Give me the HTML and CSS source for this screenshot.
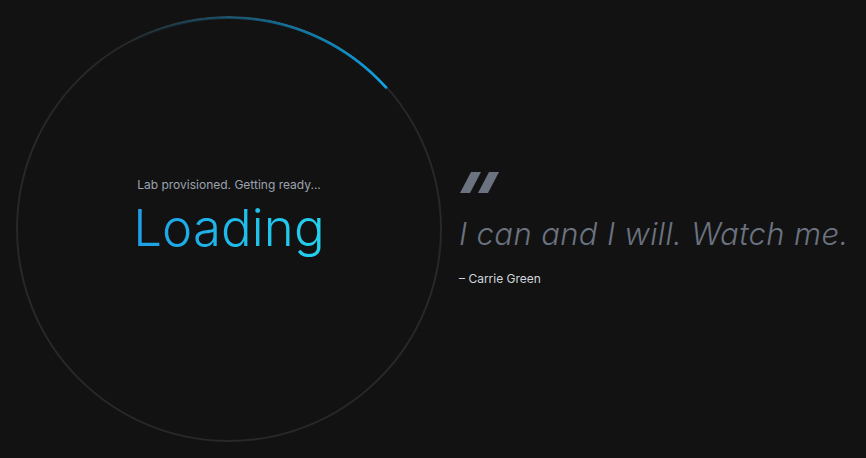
FILE: index.html
```html
<!DOCTYPE html>
<html>
<head>
<meta charset="utf-8">
<link rel="stylesheet" href="styles.css">
</head>
<body>
<main class="page">
  <section class="loader">
    <div class="ring"></div>
    <div class="arc"></div>
    <div class="status">
      <p class="status-line">Lab provisioned. Getting ready...</p>
      <h1 class="loading">Loading</h1>
    </div>
  </section>
  <section class="quote">
    <svg class="quote-mark" width="40" height="21" viewBox="0 0 40 21">
      <polygon points="11,0 21,0 10,21 0,21" fill="#6b7280"/>
      <polygon points="29,0 39,0 28,21 18,21" fill="#6b7280"/>
    </svg>
    <p class="quote-text">I can and I will. Watch me.</p>
    <p class="author">– Carrie Green</p>
  </section>
</main>
</body>
</html>
```
FILE: styles.css
```css
html, body {
  margin: 0;
  padding: 0;
  background: #121212;
}
.page {
  width: 866px;
  height: 458px;
  display: flex;
  align-items: center;
  padding-left: 16px;
  box-sizing: border-box;
  gap: 17px;
}
.loader {
  display: grid;
  width: 426px;
  height: 426px;
  flex: none;
}
.ring, .arc, .status {
  grid-area: 1 / 1;
}
.ring {
  border: 2px solid #282828;
  border-radius: 50%;
}
.arc {
  border-radius: 50%;
  background: conic-gradient(from -30deg, rgba(14,165,233,0) 0deg, rgba(14,165,233,0.35) 30deg, #0ea5e9 78deg, transparent 78.5deg);
  -webkit-mask: radial-gradient(circle closest-side, transparent 209.5px, #000 210.5px, #000 212.5px, transparent 213.5px);
  mask: radial-gradient(circle closest-side, transparent 209.5px, #000 210.5px, #000 212.5px, transparent 213.5px);
}
.status {
  display: flex;
  flex-direction: column;
  align-items: center;
  justify-content: center;
  padding-bottom: 24px;
}
.status-line {
  margin: 0;
  font-family: Inter, "Noto Sans", sans-serif;
  font-size: 12px;
  color: #9ca3af;
}
.loading {
  margin: 6px 0 0;
  font-family: Inter, Lato, sans-serif;
  font-weight: 300;
  font-size: 51px;
  line-height: 60px;
  letter-spacing: 0.1px;
  background: linear-gradient(90deg, #1d9fe8, #22d3ee);
  -webkit-background-clip: text;
  background-clip: text;
  color: transparent;
}
.quote {
  display: flex;
  flex-direction: column;
}
.quote-mark {
  display: block;
  margin-left: 1px;
}
.quote-text {
  margin: 21px 0 0;
  font-family: Inter, Lato, sans-serif;
  font-style: italic;
  font-weight: 300;
  font-size: 31px;
  line-height: 40px;
  letter-spacing: 0.38px;
  color: #6b7280;
  white-space: nowrap;
}
.author {
  margin: 17px 0 0;
  font-family: Inter, "Noto Sans", sans-serif;
  font-size: 12px;
  color: #d1d5db;
}
```
